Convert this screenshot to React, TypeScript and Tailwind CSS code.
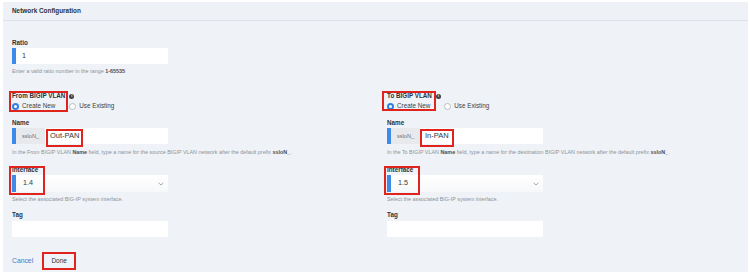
import type React from "react"

const font = { fontFamily: '"Liberation Sans", Arial, sans-serif' }

const Label: React.FC<{ text: string; className?: string }> = ({ text, className = "" }) => (
  <div className={`h-[8px] text-[6.3px] font-bold leading-[8px] text-[#2e3236] ${className}`}>{text}</div>
)

const Hint: React.FC<{ children: React.ReactNode; className?: string }> = ({ children, className = "" }) => (
  <div className={`h-[8px] whitespace-nowrap text-[5.4px] leading-[8px] text-[#8d9298] ${className}`}>{children}</div>
)

const Radio: React.FC<{ checked?: boolean; label: string }> = ({ checked, label }) => (
  <span className="inline-flex items-center gap-[3px]">
    {checked ? (
      <span className="flex h-[7px] w-[7px] items-center justify-center rounded-full bg-[#2f80e4]">
        <span className="h-[3px] w-[3px] rounded-full bg-white" />
      </span>
    ) : (
      <span className="h-[7px] w-[7px] rounded-full border border-[#b9bec5] bg-white" />
    )}
    <span className="text-[6.3px] leading-[8px] text-[#3a3f45]">{label}</span>
  </span>
)

const Annot: React.FC<{ className: string }> = ({ className }) => (
  <span className={`pointer-events-none absolute border-2 border-[#e0241d] ${className}`} />
)

const VlanColumn: React.FC<{
  title: string
  boxClass: string
  name: string
  nameBox: string
  hintDir: string
  iface: string
}> = ({ title, boxClass, name, nameBox, hintDir, iface }) => (
  <div className="flex flex-col">
    <div className="relative">
      <div className="flex h-[8px] items-center gap-[4px]">
        <span className="text-[6.3px] font-bold leading-[8px] text-[#2e3236]">{title}</span>
        <span className="flex h-[5px] w-[5px] items-center justify-center rounded-full bg-[#3a3f45] text-[4px] font-bold leading-none text-white">
          i
        </span>
      </div>
      <div className="mt-[2px] flex h-[8px] items-center gap-[14px]">
        <Radio checked label="Create New" />
        <Radio label="Use Existing" />
      </div>
      <Annot className={boxClass} />
    </div>

    <Label text="Name" className="mt-[9px]" />
    <div className="relative mt-[1px] flex h-[16px] w-[156px] bg-white">
      <span className="w-[4px] bg-[#3d8be6]" />
      <span className="flex w-[29px] items-center bg-[#e7e9ec] pl-[6px] text-[5.6px] text-[#6b7078]">ssloN_</span>
      <span className="flex items-center pl-[5px] text-[7.5px] text-[#33383d]">{name}</span>
      <Annot className={nameBox} />
    </div>
    <Hint className="mt-[4px]">
      In the {hintDir} BIGIP VLAN <b className="text-[#4a4f55]">Name</b> field, type a name for the{" "}
      {hintDir === "From" ? "source" : "destination"} BIGIP VLAN network after the default prefix{" "}
      <b className="text-[#4a4f55]">ssloN_</b>.
    </Hint>

    <div className="relative mt-[10px]">
      <Label text="Interface" />
      <div className="mt-[1px] flex h-[17px] w-[156px] items-center bg-gradient-to-b from-white to-[#f7f8f9]">
        <span className="h-full w-[4px] bg-[#3d8be6]" />
        <span className="pl-[7px] text-[7.2px] text-[#33383d]">{iface}</span>
        <svg className="ml-auto mr-[4px]" width="6" height="4" viewBox="0 0 6 4">
          <path d="M0.6 0.8 L3 3 L5.4 0.8" fill="none" stroke="#8e949a" strokeWidth="0.8" />
        </svg>
      </div>
      <Annot className="-left-[3px] top-0 h-[29px] w-[36px]" />
    </div>
    <Hint className="mt-[3px]">Select the associated BIG-IP system interface.</Hint>

    <Label text="Tag" className="mt-[8px]" />
    <div className="mt-[2px] h-[16px] w-[156px] bg-white" />
  </div>
)

export default function App() {
  return (
    <div className="h-[274px] w-[750px] overflow-hidden bg-white pb-[2px] pl-[3px] pr-[2px] pt-[2px]" style={font}>
      <div className="h-full bg-[#eff2f7]">
        <div className="flex h-[19px] items-center border-b border-[#dde2e9] bg-[#eef1f6] pl-[9px] text-[6.4px] font-bold text-[#2e3236]">
          Network Configuration
        </div>

        <div className="pl-[9px] pt-[18px]">
          <Label text="Ratio" />
          <div className="mt-[1px] flex h-[16px] w-[156px] items-center bg-white">
            <span className="h-full w-[4px] bg-[#3d8be6]" />
            <span className="pl-[6px] text-[7.2px] text-[#33383d]">1</span>
          </div>
          <Hint className="mt-[3px]">
            Enter a valid ratio number in the range <b className="text-[#4a4f55]">1-65535</b>.
          </Hint>

          <div className="mt-[17px] grid grid-cols-[375px_1fr]">
            <VlanColumn
              title="From BIGIP VLAN"
              boxClass="-left-[3px] -top-[1px] h-[21px] w-[59px]"
              name="Out-PAN"
              nameBox="left-[34px] top-[1px] h-[18px] w-[37px]"
              hintDir="From"
              iface="1.4"
            />
            <VlanColumn
              title="To BIGIP VLAN"
              boxClass="-left-[5px] -top-[1px] h-[20px] w-[54px]"
              name="In-PAN"
              nameBox="left-[33px] top-[1px] h-[18px] w-[34px]"
              hintDir="To"
              iface="1.5"
            />
          </div>

          <div className="mt-[15px] flex h-[18px] items-center">
            <button className="text-[6.8px] text-[#3b7fc6]">Cancel</button>
            <button className="ml-[9px] flex h-[18px] w-[34px] items-center justify-center border-2 border-[#e0241d] text-[6.5px] text-[#2e3236]">
              Done
            </button>
          </div>
        </div>
      </div>
    </div>
  )
}
